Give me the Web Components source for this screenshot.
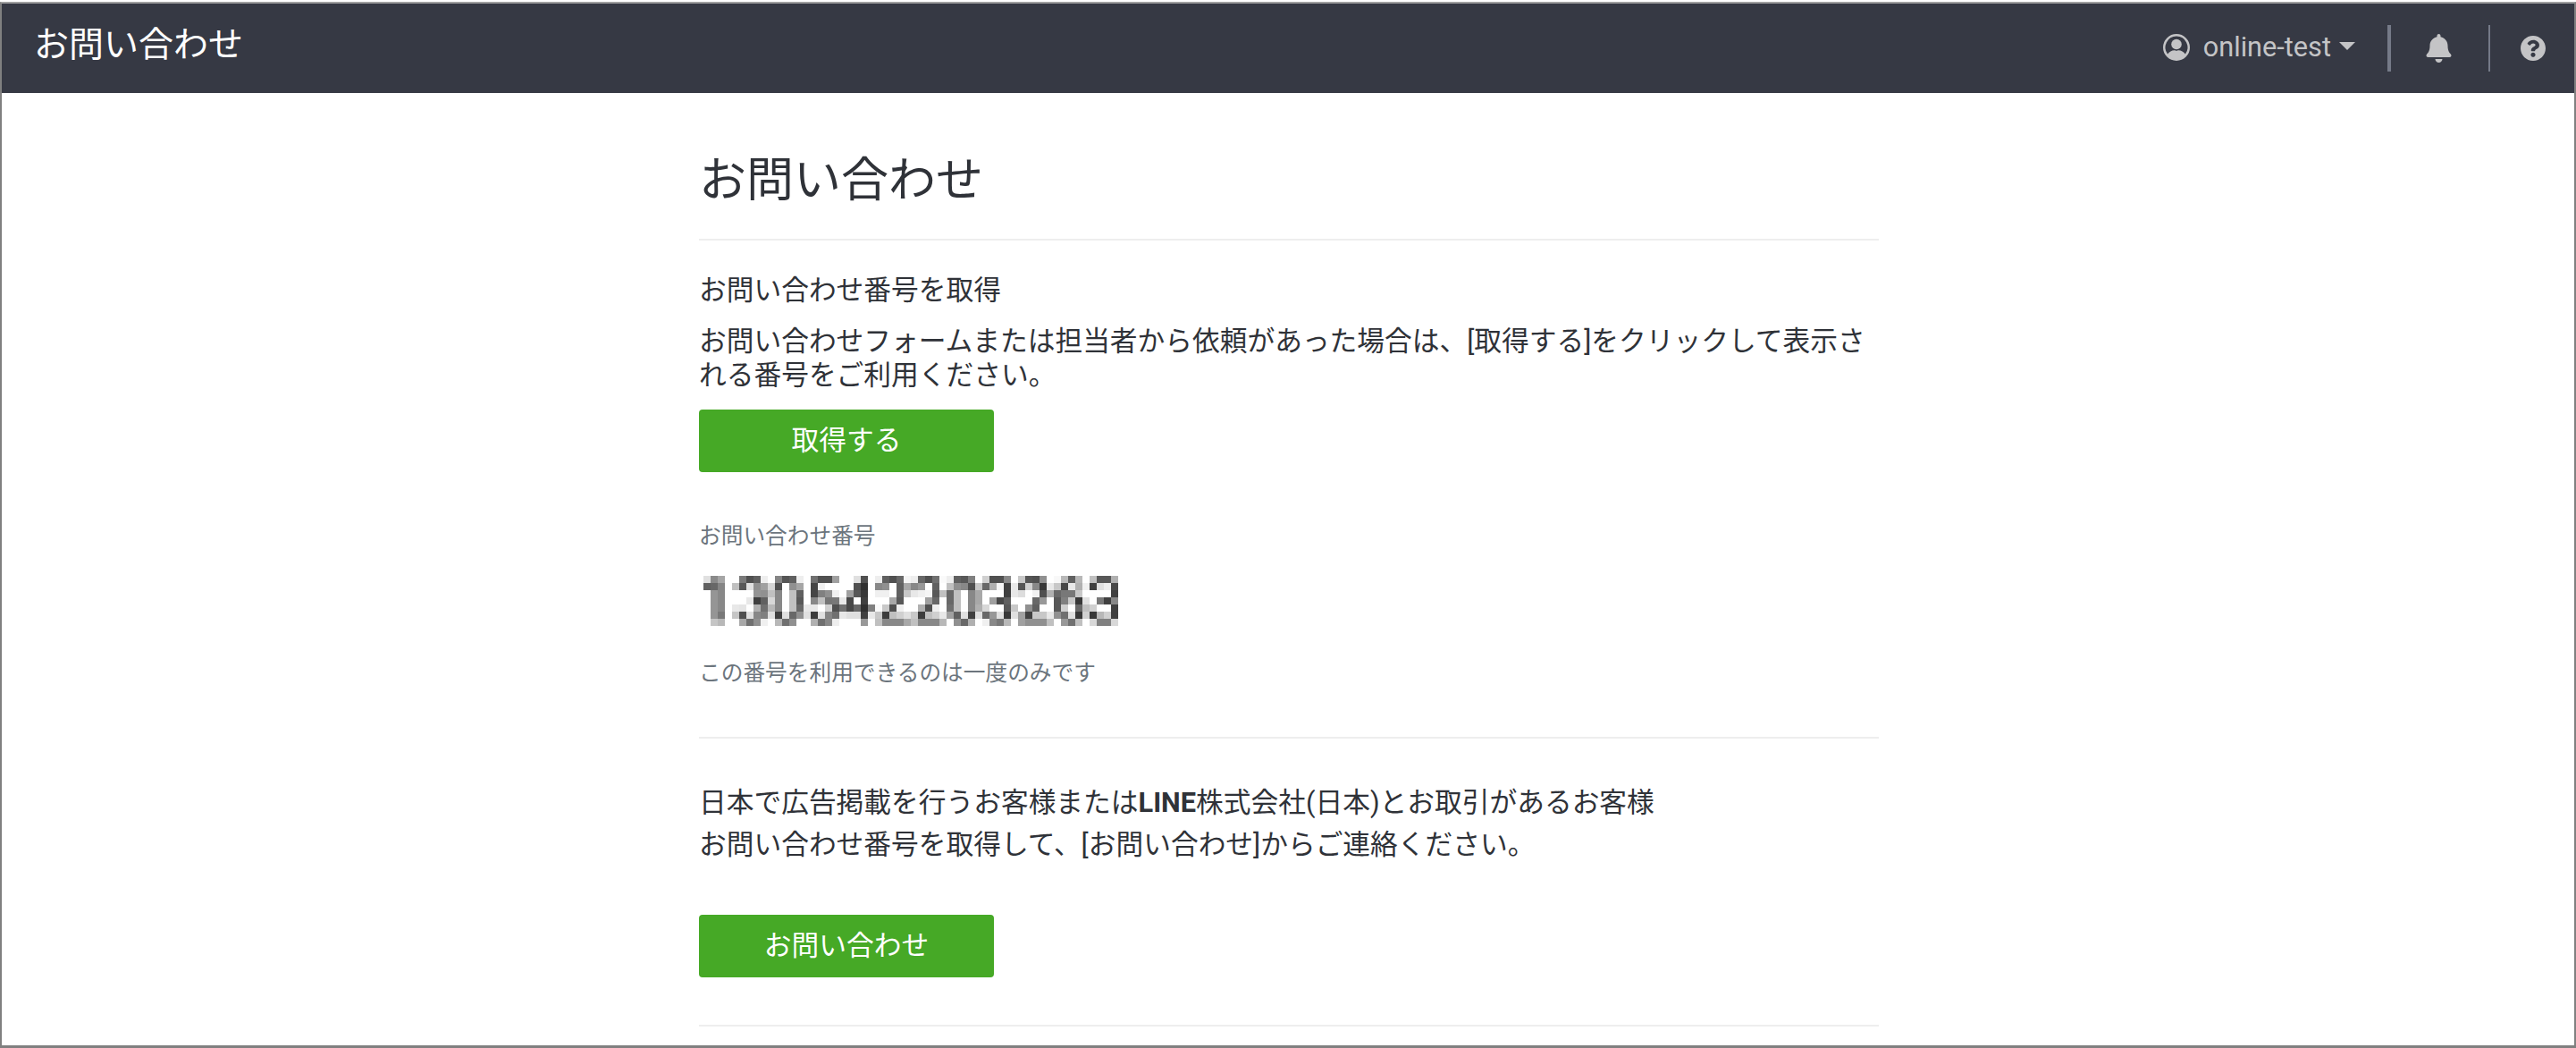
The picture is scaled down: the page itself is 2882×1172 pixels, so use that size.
<!DOCTYPE html>
<html lang="ja">
<head>
<meta charset="utf-8">
<title>お問い合わせ</title>
<style>
  html, body { margin: 0; padding: 0; height: 1172px; overflow: hidden; background: #fff; }
  body { font-family: Roboto, "Noto Sans CJK JP", sans-serif; color: #2f3238; }
</style>
</head>
<body>
<app-frame>
  <app-header slot="header" title-text="お問い合わせ" user="online-test"></app-header>
  <contact-page></contact-page>
</app-frame>

<script>
class AppFrame extends HTMLElement {
  constructor() {
    super();
    this.shadowDOM = this.attachShadow({mode: "open"});
    this.shadowDOM.innerHTML = `
      <style>
        :host {
          display: block;
          box-sizing: border-box;
          height: 1170px;
          margin-top: 2px;
          border: 2px solid #808080;
          border-top-color: #a0a0a0;
          border-bottom-width: 3px;
          overflow: hidden;
        }
      </style>
      <slot name="header"></slot>
      <slot></slot>`;
  }
}

class AppHeader extends HTMLElement {
  constructor() {
    super();
    this.shadowDOM = this.attachShadow({mode: "open"});
  }

  connectedCallback() {
    this.shadowDOM.innerHTML = `
      <style>
        :host {
          display: flex;
          align-items: center;
          height: 100px;
          background: #363944;
          color: #c4c4c6;
          font-family: Roboto, "Noto Sans CJK JP", sans-serif;
        }
        h1 {
          margin: -8px 0 0 36px;
          font-size: 39px;
          line-height: 48px;
          font-weight: 400;
          color: #fff;
        }
        nav { display: flex; align-items: center; margin-left: auto; padding-right: 32px; }
        .user { display: flex; align-items: center; font-size: 30.700px; margin-top: -3px; }
        .user svg { width: 32px; height: 32px; margin-right: 14px; fill: currentColor; }
        .caret {
          width: 0; height: 0; margin-left: 9px;
          border-left: 9px solid transparent;
          border-right: 9px solid transparent;
          border-top: 9px solid currentColor;
          margin-top: -3px;
        }
        .sep { width: 4px; height: 52px; background: #757a88; margin-left: 36px; }
        .sep.thin { width: 2px; margin-left: 41px; }
        .bell { width: 29px; height: 32px; fill: currentColor; margin-left: 39px; }
        .help { width: 28px; height: 28px; fill: currentColor; margin-left: 34px; }
      </style>
      <h1>${this.getAttribute("title-text")}</h1>
      <nav>
        <div class="user">
          <svg viewBox="0 0 32 32">
            <path d="M16 1a15 15 0 1 0 0 30 15 15 0 0 0 0-30zm0 2.600a12.400 12.400 0 0 1 9.900 19.900c-1.800-2.700-4.600-4.300-7.600-4.300-.8 0-1.300.5-2.300.5s-1.500-.5-2.300-.5c-3 0-5.800 1.600-7.600 4.300A12.400 12.400 0 0 1 16 3.600z"/>
            <circle cx="16" cy="12.500" r="5.800"/>
          </svg>
          <span>${this.getAttribute("user")}</span>
          <i class="caret"></i>
        </div>
        <div class="sep"></div>
        <svg class="bell" viewBox="0 0 448 512"><path d="M224 512c35.320 0 63.970-28.650 63.970-64H160.030c0 35.350 28.650 64 63.970 64zm215.390-149.710c-19.320-20.760-55.470-51.990-55.470-154.290 0-77.700-54.480-139.900-127.940-155.160V32c0-17.670-14.320-32-31.980-32s-31.980 14.330-31.980 32v20.840C118.560 68.100 64.080 130.300 64.080 208c0 102.300-36.150 133.530-55.470 154.290-6 6.450-8.660 14.160-8.610 21.710.11 16.400 12.980 32 32.100 32h383.800c19.120 0 32-15.600 32.100-32 .05-7.550-2.610-15.270-8.610-21.710z"/></svg>
        <div class="sep thin"></div>
        <svg class="help" viewBox="8 8 496 496"><path d="M504 256c0 136.997-111.043 248-248 248S8 392.997 8 256C8 119.083 119.043 8 256 8s248 111.083 248 248zM262.655 90c-54.497 0-89.255 22.957-116.549 63.758-3.536 5.286-2.353 12.415 2.715 16.258l34.699 26.310c5.205 3.947 12.621 3.008 16.665-2.122 17.864-22.658 30.113-35.797 57.303-35.797 20.429 0 45.698 13.148 45.698 32.958 0 14.976-12.363 22.667-32.534 33.976C247.128 238.528 216 254.941 216 296v4c0 6.627 5.373 12 12 12h56c6.627 0 12-5.373 12-12v-1.333c0-28.462 83.186-29.647 83.186-106.667 0-58.002-60.165-102-116.531-102zM256 338c-25.365 0-46 20.635-46 46 0 25.364 20.635 46 46 46s46-20.636 46-46c0-25.365-20.635-46-46-46z"/></svg>
      </nav>`;
  }
}

class GreenButton extends HTMLElement {
  constructor() {
    super();
    this.shadowDOM = this.attachShadow({mode: "open"});
    this.shadowDOM.innerHTML = `
      <style>
        :host {
          display: flex;
          align-items: center;
          justify-content: center;
          box-sizing: border-box;
          width: 330px;
          height: 70px;
          padding-bottom: 7px;
          background: #46a926;
          border-radius: 4px;
          color: #fff;
          font-size: 30.720px;
        }
      </style>
      <slot></slot>`;
  }
}

// pixelated number: one row per line, two hex digits per 8px cell
const MOSAIC = [
  "e0 8a a5 ff ff 7a 50 60 ee ff 85 55 60 ee ff 70 50 50 a0 ff ff e0 50 ff ee 60 50 68 f5 ee 68 50 70 fa ee 60 58 80 ff d0 50 50 88 ff c8 55 50 90 ff f8 b8 60 b8 ff c0 58 58 b0",
  "60 68 85 ff c0 58 e0 90 a0 d5 50 ff 90 a5 ff 45 f0 ff ff ff ff 50 30 ff 88 90 ff 60 a8 88 98 ff 60 ff c0 90 88 50 c8 68 b0 f5 40 e8 55 d0 88 38 e8 c8 48 e8 b0 f0 40 e0 ee 48",
  "ff 95 88 ff ff ff ff 95 90 c0 88 ff c0 60 ff 45 80 90 f0 ff a0 58 38 ff f0 f0 ff 60 c8 e8 f0 f5 58 c0 68 c0 ff 88 a8 ff ff ff 40 e8 dd ff f0 50 b0 68 78 78 c8 ff ff ff ff 40",
  "ff 95 88 ff ff ff e8 40 60 d8 88 ff c0 58 ff 88 c0 75 78 e8 48 ff 40 ff ff ff a8 58 ff ff ff a0 68 ff 68 c0 ff 88 a8 ff a0 48 60 ff ff ff 68 98 ff 58 80 c8 38 e0 ff 78 40 88",
  "ff 95 88 ff e8 e5 ff b0 70 b8 88 ff c0 68 e8 e8 ff d0 50 70 48 68 30 80 fa c8 50 f0 ff ff b0 50 f0 ff 70 c0 ff 88 b0 d8 ff ff 58 c8 ff 90 60 ff ff 58 d0 ff 68 c0 d0 ff ff 40",
  "ff 95 78 ff c5 50 e0 88 80 e0 40 e0 68 90 e0 3c e0 85 70 e8 e0 e0 40 e8 c8 3c c0 d0 e0 c8 3c c0 d0 e8 a0 60 e0 40 e0 68 98 e0 38 e0 a0 40 c8 c8 e8 90 70 e0 38 d0 38 b8 d0 40",
  "ff c5 b8 ff ff a8 70 90 f0 ff b8 70 90 ff ff b0 70 88 ee ff ff ff 98 ff c0 88 88 88 a8 c0 88 88 88 b8 ff 90 68 b0 ff f0 88 78 b8 ff a0 90 90 90 c0 ff 98 70 c0 ff d8 80 80 d8"
];

class MosaicNumber extends HTMLElement {
  constructor() {
    super();
    this.shadowDOM = this.attachShadow({mode: "open"});
    let rects = "";
    MOSAIC.forEach((row, y) => {
      row.split(" ").forEach((v, x) => {
        if (v != "ff") rects += `<rect x="${x * 8}" y="${y * 8}" width="8" height="8" fill="#${v}${v}${v}"/>`;
      });
    });
    this.shadowDOM.innerHTML = `
      <style>
        :host { display: block; height: 56px; margin-left: 5px; }
        svg { display: block; }
      </style>
      <svg width="464" height="56" shape-rendering="crispEdges" role="img" aria-label="お問い合わせ番号">${rects}</svg>`;
  }
}

class ContactPage extends HTMLElement {
  constructor() {
    super();
    this.shadowDOM = this.attachShadow({mode: "open"});
    this.shadowDOM.innerHTML = `
      <style>
        :host {
          display: block;
          box-sizing: border-box;
          width: 1320px;
          margin-left: 780px;
          color: #2f3238;
          font-size: 30.720px;
          font-family: Roboto, "Noto Sans CJK JP", sans-serif;
        }
        h2 { margin: 67px 0 34px; font-size: 53px; line-height: 62px; font-weight: 400; }
        hr { height: 2px; margin: 0; border: 0; background: #eeeeee; }
        p { margin: 0; line-height: 38px; }
        .get-title { margin-top: 37px; }
        .get-text { margin: 19px 0; }
        .label { margin-top: 57px; font-size: 24.700px; line-height: 30px; color: #6c757d; }
        mosaic-number { margin-top: 29px; }
        .note { margin: 38px 0 56px; font-size: 24.700px; line-height: 30px; color: #6c757d; }
        .info { margin: 48px 0 55px; line-height: 47px; }
        .info b { font-weight: 700; }
        .last { margin-top: 53px; }
      </style>
      <h2>お問い合わせ</h2>
      <hr>
      <p class="get-title">お問い合わせ番号を取得</p>
      <p class="get-text">お問い合わせフォームまたは担当者から依頼があった場合は、[取得する]をクリックして表示される番号をご利用ください。</p>
      <green-button>取得する</green-button>
      <p class="label">お問い合わせ番号</p>
      <mosaic-number></mosaic-number>
      <p class="note">この番号を利用できるのは一度のみです</p>
      <hr>
      <p class="info">日本で広告掲載を行うお客様または<b>LINE</b>株式会社(日本)とお取引があるお客様<br>お問い合わせ番号を取得して、[お問い合わせ]からご連絡ください。</p>
      <green-button>お問い合わせ</green-button>
      <hr class="last">`;
  }
}

customElements.define("app-frame", AppFrame);
customElements.define("app-header", AppHeader);
customElements.define("green-button", GreenButton);
customElements.define("mosaic-number", MosaicNumber);
customElements.define("contact-page", ContactPage);
</script>
</body>
</html>
